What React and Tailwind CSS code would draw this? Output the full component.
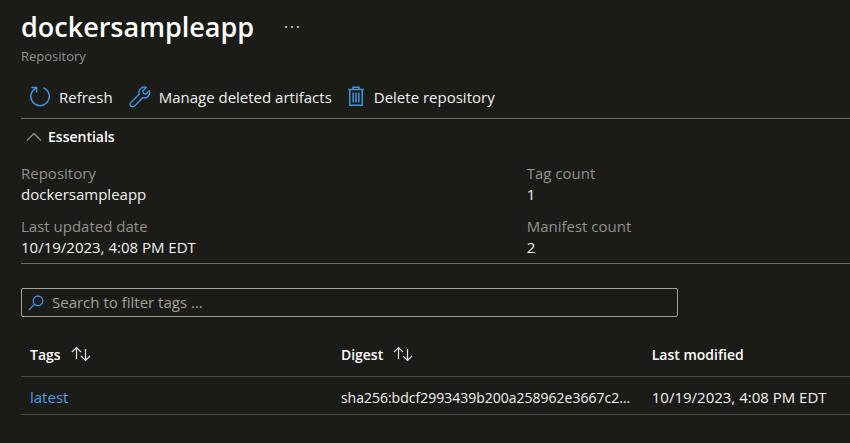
import { useState } from 'react';

const RefreshIcon = () => (
  <svg className="size-[22px] shrink-0" viewBox="0 0 22 22" fill="none" stroke="#4094e0" strokeWidth="1.5" aria-hidden="true">
    <path d="M14.2 1.8A9.2 9.2 0 1 1 7 2.2" />
    <path d="M2.4 1.5h5.2v5" />
  </svg>
);

const WrenchIcon = () => (
  <svg className="size-[22px] shrink-0" viewBox="0 0 22 22" fill="none" stroke="#4094e0" strokeWidth="1.4" strokeLinejoin="round" aria-hidden="true">
    <path d="M17.2 1.5a5.2 5.2 0 0 0-6.9 6.5L1.9 16.4a2.5 2.5 0 0 0 3.6 3.6l8.4-8.3a5.2 5.2 0 0 0 6.4-6.9l-3.5 3.2-2.4-.6-.6-2.4z" />
  </svg>
);

const TrashIcon = () => (
  <svg className="h-[22px] w-4 shrink-0" viewBox="0 0 16 22" fill="none" stroke="#4094e0" strokeWidth="1.5" aria-hidden="true">
    <path d="M0 3.5h16M5 3.5V1.2h6v2.3M1.8 3.5v15.8h12.4V3.5M5.2 6.5v10M8 6.5v10M10.8 6.5v10" />
  </svg>
);

const SearchIcon = () => (
  <svg className="size-4 shrink-0" viewBox="0 0 16 16" fill="none" stroke="#4094e0" strokeWidth="1.3" aria-hidden="true">
    <circle cx="10" cy="5.8" r="4.8" />
    <path d="M6.6 9.3L.8 15" />
  </svg>
);

const SortIcon = () => (
  <svg className="h-4 w-5 shrink-0" viewBox="0 0 20 16" fill="none" stroke="#e6e6e4" strokeWidth="1.2" aria-hidden="true">
    <path d="M5.5 13V1.5M1 6l4.5-4.5L10 6M14.5 3v11.5M10 10l4.5 4.5L19 10" />
  </svg>
);

const ChevronUpIcon = () => (
  <svg className="h-4 w-4 shrink-0" viewBox="0 0 16 16" fill="none" stroke="#8f8e8b" strokeWidth="1.5" aria-hidden="true">
    <path d="M1 11.5l7-7 7 7" />
  </svg>
);

const essentials = [
  { label: 'Repository', value: 'dockersampleapp' },
  { label: 'Tag count', value: '1' },
  { label: 'Last updated date', value: '10/19/2023, 4:08 PM EDT' },
  { label: 'Manifest count', value: '2' },
];

const tags = [
  {
    name: 'latest',
    digest: 'sha256:bdcf2993439b200a258962e3667c2...',
    modified: '10/19/2023, 4:08 PM EDT',
  },
];

const App = () => {
  const [open, setOpen] = useState(true);
  const [filter, setFilter] = useState('');

  const rows = tags.filter((tag) => tag.name.includes(filter));

  return (
    <main className="min-h-screen bg-[#1b1b17] pl-[21px] pt-2 font-['Open_Sans',sans-serif] text-[15px] leading-[21px] text-[#f3f2f0]">
      <header>
        <div className="flex items-center gap-[30px]">
          <h1 className="text-[27px] font-semibold leading-[38px] text-white">dockersampleapp</h1>
          <button type="button" aria-label="More actions">
            <svg className="h-4 w-4" viewBox="0 0 16 16" fill="#e6e6e4" aria-hidden="true">
              <circle cx="2" cy="8" r="1" />
              <circle cx="8" cy="8" r="1" />
              <circle cx="14" cy="8" r="1" />
            </svg>
          </button>
        </div>
        <p className="text-[13px] leading-5 text-[#93918e]">Repository</p>
      </header>

      {/* Toolbar */}
      <div className="flex items-center gap-4 border-b border-[#6b6b68] px-2 pb-2.5 pt-5">
        <button type="button" className="flex items-center gap-2">
          <RefreshIcon />
          Refresh
        </button>
        <button type="button" className="flex items-center gap-2">
          <WrenchIcon />
          Manage deleted artifacts
        </button>
        <button type="button" className="flex items-center gap-2.5">
          <TrashIcon />
          Delete repository
        </button>
      </div>

      {/* Essentials */}
      <section className="border-b border-[#6b6b68] pb-[5px]">
        <button
          type="button"
          aria-expanded={open}
          onClick={() => setOpen(!open)}
          className="flex items-center gap-1.5 px-[5px] pb-2 pt-[7px] text-[14px] font-semibold text-white"
        >
          <ChevronUpIcon />
          Essentials
        </button>
        {open && (
          <dl className="grid grid-cols-[61%_1fr] gap-y-[11px] pt-2">
            {essentials.map((item) => (
              <div key={item.label}>
                <dt className="text-[#93918e]">{item.label}</dt>
                <dd>{item.value}</dd>
              </div>
            ))}
          </dl>
        )}
      </section>

      <label className="mt-6 flex h-[29px] w-[657px] max-w-full items-center gap-2 rounded-xs border border-[#a3a29f] px-1.5">
        <SearchIcon />
        <input
          type="text"
          aria-label="Search to filter tags"
          value={filter}
          onChange={(e) => setFilter(e.target.value)}
          placeholder="Search to filter tags ..."
          className="min-w-0 flex-1 bg-transparent outline-none placeholder:text-[#a3a19e]"
        />
      </label>

      <table className="mt-4 w-full table-fixed text-left">
        <thead>
          <tr className="h-[43px] border-b border-[#4a4a47] text-[14px] text-white">
            <th className="w-[37.5%] px-[9px] font-semibold">
              <button type="button" className="flex items-center gap-2.5">
                Tags
                <SortIcon />
              </button>
            </th>
            <th className="w-[37.5%] px-[9px] font-semibold">
              <button type="button" className="flex items-center gap-2.5">
                Digest
                <SortIcon />
              </button>
            </th>
            <th className="px-[9px] font-semibold">Last modified</th>
          </tr>
        </thead>
        <tbody>
          {rows.map((tag) => (
            <tr key={tag.name} className="h-[38px] border-b border-[#4a4a47]">
              <td className="px-[9px] pt-1">
                <a href="#latest" className="text-[#4f9fe8]">{tag.name}</a>
              </td>
              <td className="whitespace-nowrap px-[9px] pt-1 text-[14px]">{tag.digest}</td>
              <td className="whitespace-nowrap px-[9px] pt-1">{tag.modified}</td>
            </tr>
          ))}
        </tbody>
      </table>
    </main>
  );
};

export default App;
